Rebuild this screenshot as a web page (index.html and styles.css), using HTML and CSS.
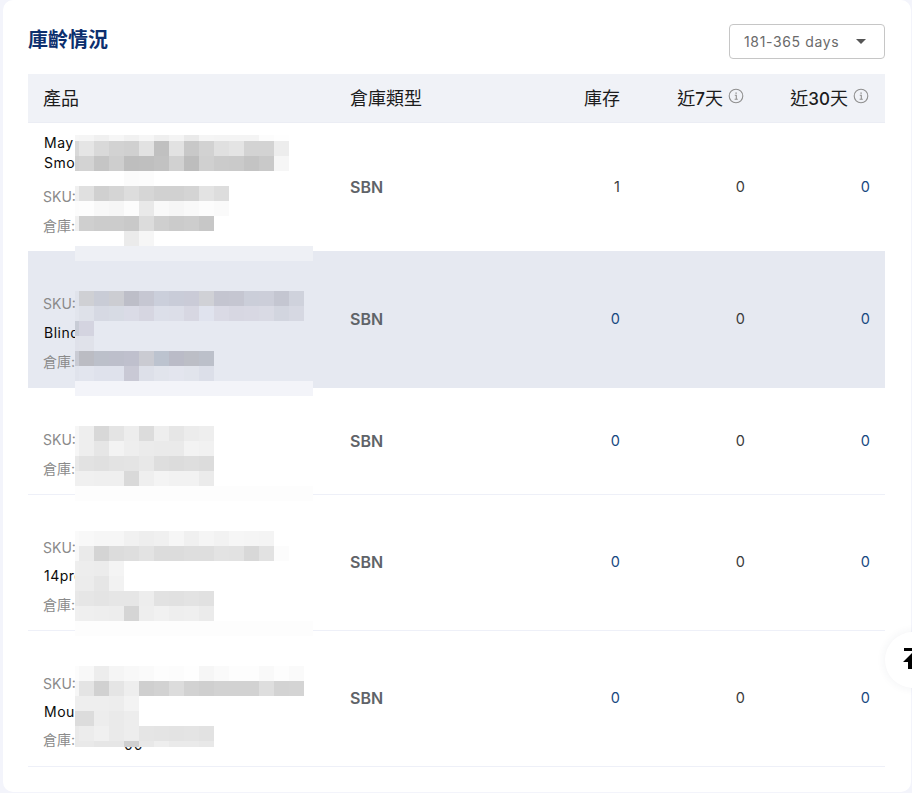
FILE: index.html
```html
<!DOCTYPE html>
<html lang="zh-Hant">
<head>
<meta charset="utf-8">
<title>庫齡情況</title>
<link rel="stylesheet" href="styles.css">
</head>
<body>
<main class="card">
  <header class="head">
    <h2 class="title">庫齡情況</h2>
    <div class="select"><span>181-365 days</span><i class="caret"></i></div>
  </header>
  <table class="stock">
    <colgroup><col class="c1"><col class="c2"><col class="c3"><col class="c4"><col class="c5"></colgroup>
    <thead>
      <tr>
        <th>產品</th>
        <th>倉庫類型</th>
        <th class="num">庫存</th>
        <th class="num">近<b>7</b>天<svg class="info" viewBox="0 0 16 16"><circle cx="8" cy="8" r="6.8"/><path d="M6.8 7.2H8.3V11M6.6 11.2H9.8"/><path class="dot" d="M7.4 4.4h1.4v1.4H7.4z"/></svg></th>
        <th class="num">近<b>30</b>天<svg class="info" viewBox="0 0 16 16"><circle cx="8" cy="8" r="6.8"/><path d="M6.8 7.2H8.3V11M6.6 11.2H9.8"/><path class="dot" d="M7.4 4.4h1.4v1.4H7.4z"/></svg></th>
      </tr>
    </thead>
    <tbody>
      <tr class="r1">
        <td class="prod first"><div class="name">May</div><div class="name">Smo</div><div class="meta gap">SKU:</div><div class="meta">倉庫:</div></td>
        <td class="type">SBN</td><td class="num dark">1</td><td class="num dark">0</td><td class="num blue">0</td>
      </tr>
      <tr class="r2 active">
        <td class="prod"><div class="meta">SKU:</div><div class="name">Blind</div><div class="meta">倉庫:</div></td>
        <td class="type">SBN</td><td class="num blue">0</td><td class="num dark">0</td><td class="num blue">0</td>
      </tr>
      <tr class="r3">
        <td class="prod"><div class="meta">SKU:</div><div class="meta">倉庫:</div></td>
        <td class="type">SBN</td><td class="num blue">0</td><td class="num dark">0</td><td class="num blue">0</td>
      </tr>
      <tr class="r2">
        <td class="prod low"><div class="meta">SKU:</div><div class="name">14pro</div><div class="meta">倉庫:</div></td>
        <td class="type">SBN</td><td class="num blue">0</td><td class="num dark">0</td><td class="num blue">0</td>
      </tr>
      <tr class="r2">
        <td class="prod low tight"><div class="meta">SKU:</div><div class="name">Mou</div><div class="meta">倉庫:</div><div class="tail">00</div></td>
        <td class="type">SBN</td><td class="num blue">0</td><td class="num dark">0</td><td class="num blue">0</td>
      </tr>
    </tbody>
  </table>
  <svg id="mosaic" class="mosaic" width="238" height="612" viewBox="75 135 238 612" shape-rendering="crispEdges" aria-hidden="true"></svg>
</main>
<div class="totop" role="button" aria-label="top">
  <svg width="28" height="24" viewBox="0 0 28 24"><path d="M1 0H19V3H1zM10 4 0 14H5V21H15V14H20z"/></svg>
</div>
<script src="mosaic.js"></script>
</body>
</html>
```
FILE: styles.css
```css
* { box-sizing: border-box; }
html, body { margin: 0; height: 793px; overflow: hidden; }
body {
  background: #f3f4fb;
  font-family: Inter, "Noto Sans CJK TC", sans-serif;
  font-size: 14px;
  color: #222;
  position: relative;
}
.card {
  position: relative;
  width: 908px;
  height: 792px;
  margin-left: 3px;
  padding: 24px 26px 0 25px;
  background: #fff;
  border-radius: 10px;
}
.head {
  display: flex;
  align-items: center;
  justify-content: space-between;
  height: 35px;
  margin-bottom: 15px;
}
.title {
  margin: 0 0 4px;
  font-size: 20px;
  line-height: 28px;
  font-weight: 700;
  color: #0c2f6e;
}
.select {
  display: flex;
  align-items: center;
  justify-content: space-between;
  width: 156px;
  height: 35px;
  padding: 0 17px 0 14px;
  border: 1px solid #c6c6c6;
  border-radius: 4px;
  color: #6a6a6a;
  font-size: 14px;
  letter-spacing: 0.65px;
}
.caret {
  width: 0;
  height: 0;
  margin-right: 1px;
  border-left: 5.5px solid transparent;
  border-right: 5.5px solid transparent;
  border-top: 5px solid #555;
}
.stock {
  width: 857px;
  table-layout: fixed;
  border-collapse: separate;
  border-spacing: 0;
}
.c1 { width: 307px; }
.c2 { width: 165px; }
.c3 { width: 135px; }
.c4 { width: 125px; }
.c5 { width: 125px; }
th {
  height: 49px;
  padding: 0 15px 3px;
  background: #f0f2f7;
  border-bottom: 1px solid #ebedf4;
  text-align: left;
  font-size: 18px;
  font-weight: 400;
  color: #1c1c1c;
  white-space: nowrap;
}
th b { font-weight: 500; font-size: 17px; }
th.num { text-align: right; }
th.num:has(.info) { padding-right: 16px; }
.info {
  width: 16px;
  height: 16px;
  margin-left: 5px;
  vertical-align: 1px;
  fill: none;
  stroke: #8f8f8f;
  stroke-width: 1.1;
}
.info .dot { fill: #8f8f8f; stroke: none; }
td {
  padding: 0 15px;
  border-bottom: 1px solid #eef0f8;
  vertical-align: middle;
}
.r1 td { height: 129px; border-bottom-color: #e6e9f1; }
.r2 td { height: 136px; }
.r3 td { height: 107px; }
.active td { background: #e6e9f1; border-bottom-color: #e6e9f1; }
td.prod { vertical-align: top; padding-top: 42px; }
td.prod.first { padding-top: 10px; }
td.prod.low { padding-top: 43px; }
.name { line-height: 20px; color: #0a0a0a; margin-bottom: 9px; letter-spacing: 0.5px; padding-left: 1px; }
.first .name { margin-bottom: 0; }
.meta { line-height: 20px; color: #8a8a8a; margin-bottom: 9px; }
.meta.gap { margin-top: 14px; }
.low .meta:first-child { margin-bottom: 8px; }
.tight .name { margin-bottom: 8px; }
.tail { margin-top: -24px; padding-left: 81px; line-height: 20px; color: #111; height: 0; letter-spacing: 1px; }
.type { font-size: 16px; font-weight: 600; color: #5f6368; padding-bottom: 1px; }
td.num { text-align: right; padding-bottom: 2px; font-size: 14.5px; }
.dark { color: #3a3a3a; }
.blue { color: #17487f; }
.mosaic { position: absolute; left: 72px; top: 135px; }
.totop {
  position: absolute;
  left: 885px;
  top: 632px;
  width: 56px;
  height: 56px;
  padding: 16px 0 0 18px;
  border-radius: 50%;
  background: #fff;
  box-shadow: 0 0 10px rgba(40, 50, 90, 0.07);
  line-height: 0;
}
```
FILE: mosaic.js
```js
// Pixelated (redacted) regions: each row is [top, bottom, colours from x=75].
// First column is 4px wide, the rest 15px. "." leaves a cell empty; two hex digits mean a grey.
var rows = [
  [135,141,"f6 f5 f0 f6 f1 f6 ef f4 ea f5 f4 f4 f4 fc fe"],
  [141,156,"d8 e5 d9 d2 d0 e2 c0 e2 c8 d2 e0 e4 d3 d3 ed"],
  [156,171,"d0 d3 c5 ce be bf c2 d1 bd d0 cb ca c4 c9 f6"],
  [171,186,". . . . fb fc"],
  [186,201,"f0 e0 d0 d5 dd d6 d1 d1 d4 e3 dd"],
  [201,216,"fc fd f8 f6 fc e9 f9 f6 f9 fc fa"],
  [216,231,"f0 cf cc cc c9 dc cf cb cd c7"],
  [231,246,". . . . eb f6"],
  [246,261,"=eef0f5"],
  [291,306,"e0e3eb cfd0d4 c9ccd6 cccdd2 bdbec8 c6c7d2 cbcfdb c9ccd8 cacbd7 d0d1d6 c4c5d0 c5c6d1 cbced9 ccced9 c4c6d1 cfd2dc"],
  [306,321,"e2e5ed dee1e9 d6d9e3 d7dbe4 dadbe6 d6d6e1 dcdfe9 dcdee8 d7d7e2 e0e3ee dadae5 d7d7e2 d8d8e3 d9dae4 d2d5df d6d8e2"],
  [321,336,"c8ccd6 d4d4e0"],
  [336,351,"dfe1ea e0e2ea"],
  [351,366,"c9cbd4 bbbcc3 bcc0ca bdbfcb bfc0cd cacbd2 bcc3cf babbc7 bcbec6 bcc0ca"],
  [366,381,"e0e3ec e2e5ee dfe2ec dfe2ec c9c9d5 dde0e9 e1e4ec e3e5ee e1e4ec dcdfe9"],
  [381,396,"=f3f4f9"],
  [426,441,"f6 ee d8 e4 ed dc ee e6 ec ee"],
  [441,456,"f6 ee e6 f3 ee eb ea ea f3 f1"],
  [456,471,"e8 e2 e0 e3 e4 e8 de dc de dc"],
  [471,486,"f0 f0 ef ef d9 ef f4 f2 f2 eb"],
  [486,501,"=fdfdfd"],
  [531,546,"fa f8 f6 f6 f1 ee f0 f6 f0 f5 f2 f6 f5 f4"],
  [546,561,"f8 ea d4 dc de e3 dc dc de de e3 e2 d8 e2 fc"],
  [561,576,"ee ed ec f4"],
  [576,591,"ec ec e6 f2"],
  [591,606,"e8 e6 e4 e6 e6 ed e2 e1 e3 e1"],
  [606,621,"f0 ef ee ed d5 ee f1 ee ef eb"],
  [621,636,"=fdfdfd"],
  [666,681,"fc f8 ed f5 f8 fa fd fc fe f6 fa fd fd f9 fd fa"],
  [681,696,"f6 e4 d1 e5 ee cf d2 dc d2 cf d2 d2 d2 de d3 d4"],
  [696,711,"ee ee ee ed f3"],
  [711,726,"dc dc ed ea ed"],
  [726,741,"e9 ec f0 ea ed e5 e4 e3 e4 e2"],
  [741,747,"e9 e9 e6 e6 d0 e8 ee ea ea e8"]
];
var svg = document.getElementById("mosaic");
function cell(x, y, w, h, fill) {
  var r = document.createElementNS("http://www.w3.org/2000/svg", "rect");
  r.setAttribute("x", x); r.setAttribute("y", y);
  r.setAttribute("width", w); r.setAttribute("height", h);
  r.setAttribute("fill", fill);
  svg.appendChild(r);
}
rows.forEach(function (row) {
  var top = row[0], h = row[1] - top, spec = row[2];
  if (spec.charAt(0) === "=") { cell(75, top, 238, h, "#" + spec.slice(1)); return; }
  var x = 75;
  spec.split(" ").forEach(function (c, i) {
    var w = i === 0 ? 4 : 15;
    if (c !== ".") cell(x, top, w, h, "#" + (c.length === 2 ? c + c + c : c));
    x += w;
  });
});
```
